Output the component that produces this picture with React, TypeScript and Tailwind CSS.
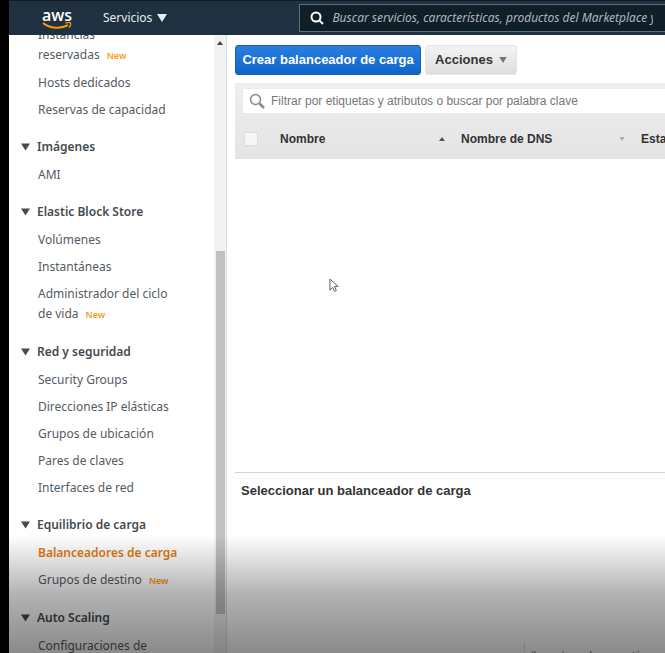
import type { ReactNode } from "react";

type Item = { label: string; isNew?: boolean; active?: boolean };
type Section = { title?: string; items: Item[] };

const sections: Section[] = [
  {
    items: [
      { label: "Instancias reservadas", isNew: true },
      { label: "Hosts dedicados" },
      { label: "Reservas de capacidad" },
    ],
  },
  { title: "Imágenes", items: [{ label: "AMI" }] },
  {
    title: "Elastic Block Store",
    items: [
      { label: "Volúmenes" },
      { label: "Instantáneas" },
      { label: "Administrador del ciclo de vida", isNew: true },
    ],
  },
  {
    title: "Red y seguridad",
    items: [
      { label: "Security Groups" },
      { label: "Direcciones IP elásticas" },
      { label: "Grupos de ubicación" },
      { label: "Pares de claves" },
      { label: "Interfaces de red" },
    ],
  },
  {
    title: "Equilibrio de carga",
    items: [
      { label: "Balanceadores de carga", active: true },
      { label: "Grupos de destino", isNew: true },
    ],
  },
  { title: "Auto Scaling", items: [{ label: "Configuraciones de lanzamiento" }] },
];

function Triangle({ className }: { className: string }) {
  return (
    <svg viewBox="0 0 10 8" className={className} aria-hidden="true">
      <path d="M0 0h10L5 8z" fill="currentColor" />
    </svg>
  );
}

function AwsLogo() {
  return (
    <a href="#" aria-label="aws" className="flex w-[30px] flex-col items-center text-white">
      <span className="h-[14px] font-['Open_Sans',sans-serif] text-[16px] leading-[14px] font-semibold">aws</span>
      <svg viewBox="0 0 30 7" className="h-[7px] w-[30px]" aria-hidden="true">
        <path d="M1 1C8 6.800 19 7 26 3.200" fill="none" stroke="#f90" strokeWidth="2" />
        <path d="M23.500 1.200c2-.8 4.500-.8 5 0 .4.9-.3 3-1.500 4.400" fill="none" stroke="#f90" strokeWidth="1.300" />
      </svg>
    </a>
  );
}

function Header() {
  return (
    <header className="flex h-[35px] shrink-0 items-center overflow-hidden border-t border-[#111a22] bg-[#1f3140] pl-[33px]">
      <AwsLogo />
      <button className="ml-[31px] flex items-center gap-[5px] font-['Noto_Sans',sans-serif] text-[12px] text-[#e8ecef]">
        Servicios
        <Triangle className="h-2 w-[10px]" />
      </button>
      <label className="ml-[132px] flex h-7 min-w-0 flex-1 items-center gap-2 border border-r-0 border-[#55717f] bg-[#101e27] pl-[10px]">
        <svg viewBox="0 0 14 14" className="size-[14px] shrink-0 text-white" fill="none" stroke="currentColor" strokeWidth="2" aria-hidden="true">
          <circle cx="6" cy="6" r="4.500" />
          <path d="M9.500 9.500L13 13" />
        </svg>
        <input
          type="search"
          aria-label="Buscar"
          placeholder="Buscar servicios, características, productos del Marketplace y documentos"
          className="min-w-0 flex-1 bg-transparent font-['Noto_Sans',sans-serif] text-[12px] italic outline-none placeholder:text-[#a9b8c0]"
        />
      </label>
    </header>
  );
}

function NavSection({ title, items }: Section) {
  return (
    <section>
      {title && (
        <h2 className="mb-2 font-semibold text-[#444a4f]">
          <button className="flex items-center gap-[7px]">
            <Triangle className="h-2 w-[9px]" />
            {title}
          </button>
        </h2>
      )}
      <ul className="flex flex-col gap-[7px] pr-8 pl-[17px]">
        {items.map((item) => (
          <li key={item.label}>
            <a href="#" className={item.active ? "font-semibold whitespace-nowrap text-[#e47911]" : "text-[#545b64]"}>
              {item.label}
            </a>
            {item.isNew && <span className="ml-[7px] text-[9px] font-semibold text-[#f79a1c]">New</span>}
          </li>
        ))}
      </ul>
    </section>
  );
}

function Sidebar() {
  return (
    <aside className="flex w-[218px] shrink-0 overflow-hidden border-r border-[#dcdcdc]">
      <nav className="-mt-[10px] flex min-w-0 flex-1 flex-col gap-[17px] pl-3 font-['Noto_Sans',sans-serif] text-[12px] leading-5">
        {sections.map((s, i) => (
          <NavSection key={i} {...s} />
        ))}
      </nav>
      <div className="flex w-3 shrink-0 flex-col items-center bg-[#f3f2f3]" aria-hidden="true">
        <svg viewBox="0 0 6 4" className="mt-[6px] h-1 w-[6px]">
          <path d="M0 4h6L3 0z" fill="#444" />
        </svg>
        <div className="mt-[206px] h-[363px] w-[9px] shrink-0 bg-[#c1c1c1]" />
      </div>
    </aside>
  );
}

function Th({ children, className, arrow }: { children: ReactNode; className: string; arrow?: ReactNode }) {
  return (
    <th className={className}>
      <div className="flex items-center justify-between pr-4">
        {children}
        {arrow}
      </div>
    </th>
  );
}

function Main() {
  return (
    <main className="flex min-w-0 flex-1 flex-col overflow-hidden pl-2 font-['Liberation_Sans',Arial,sans-serif] text-[12px] text-[#333]">
      <div className="flex gap-1 pt-[10px] pb-2 font-bold">
        <button className="h-[30px] w-[186px] rounded-[3px] border border-[#1a5fb4] bg-linear-to-b from-[#2a7de0] to-[#0f66c8] text-[13px] whitespace-nowrap text-white">
          Crear balanceador de carga
        </button>
        <button className="flex h-[30px] w-[92px] items-center justify-center gap-[6px] rounded-[3px] border border-[#e6e6e6] bg-linear-to-b from-[#f3f3f3] to-[#dedede] text-[13px]">
          Acciones
          <Triangle className="h-[6px] w-2 text-[#777]" />
        </button>
      </div>
      <div className="flex flex-col bg-linear-to-b from-[#eeeeee] to-[#e4e4e4]">
        <label className="my-[6px] ml-2 flex h-6 items-center gap-[6px] bg-white pl-[6px]">
          <svg viewBox="0 0 16 16" className="size-4 shrink-0 text-[#888]" fill="none" stroke="currentColor" aria-hidden="true">
            <circle cx="6.500" cy="6.500" r="5" strokeWidth="1.500" />
            <path d="M10.500 10.500L15 15" strokeWidth="2.500" />
          </svg>
          <input
            type="text"
            aria-label="Filtrar"
            placeholder="Filtrar por etiquetas y atributos o buscar por palabra clave"
            className="min-w-0 flex-1 outline-none placeholder:text-[#777]"
          />
        </label>
        <table className="w-[610px] table-fixed text-left">
          <thead>
            <tr className="h-10">
              <th className="w-[45px] pl-[9px]">
                <input type="checkbox" aria-label="Seleccionar todo" className="block size-[14px] appearance-none border border-[#ddd] bg-[#f7f7f7]" />
              </th>
              <Th className="w-[181px]" arrow={<svg viewBox="0 0 6 4" className="h-1 w-[6px]"><path d="M0 4h6L3 0z" fill="#555" /></svg>}>
                Nombre
              </Th>
              <Th className="w-[180px]" arrow={<Triangle className="h-1 w-[6px] text-[#aaa]" />}>
                Nombre de DNS
              </Th>
              <Th className="">Estado</Th>
            </tr>
          </thead>
        </table>
      </div>
      <section className="mt-[313px] border-t border-[#d4d4d4]">
        <h2 className="mt-[5px] border-t border-[#f2f2f2] pt-1 pl-[6px] text-[13px] leading-4 font-bold">
          Seleccionar un balanceador de carga
        </h2>
      </section>
    </main>
  );
}

export default function App() {
  return (
    <div className="relative flex h-screen flex-col overflow-hidden border-l-[9px] border-black bg-white">
      <Header />
      <div className="flex min-h-0 flex-1">
        <Sidebar />
        <Main />
      </div>
      <svg viewBox="0 0 12 16" className="absolute top-[278px] left-[320px] h-[15px] w-[11px]" aria-hidden="true">
        <path d="M1 1v12l3-3 2 4.500 2-1-2-4.500h4z" fill="#fff" stroke="#555" />
      </svg>
      <div className="absolute inset-x-0 bottom-0 h-[118px] bg-linear-to-b from-black/0 via-black/30 to-black/46" />
      <div className="absolute right-0 bottom-0 h-[10px] w-[141px] overflow-hidden border-l border-[#7c7c7c] pt-[5px] pl-[6px] font-['Liberation_Sans',Arial,sans-serif] text-[10px] leading-4 whitespace-nowrap text-[#333]">
        <span className="mr-[6px]">||</span>
        meet.google.com está compartiendo
      </div>
    </div>
  );
}
